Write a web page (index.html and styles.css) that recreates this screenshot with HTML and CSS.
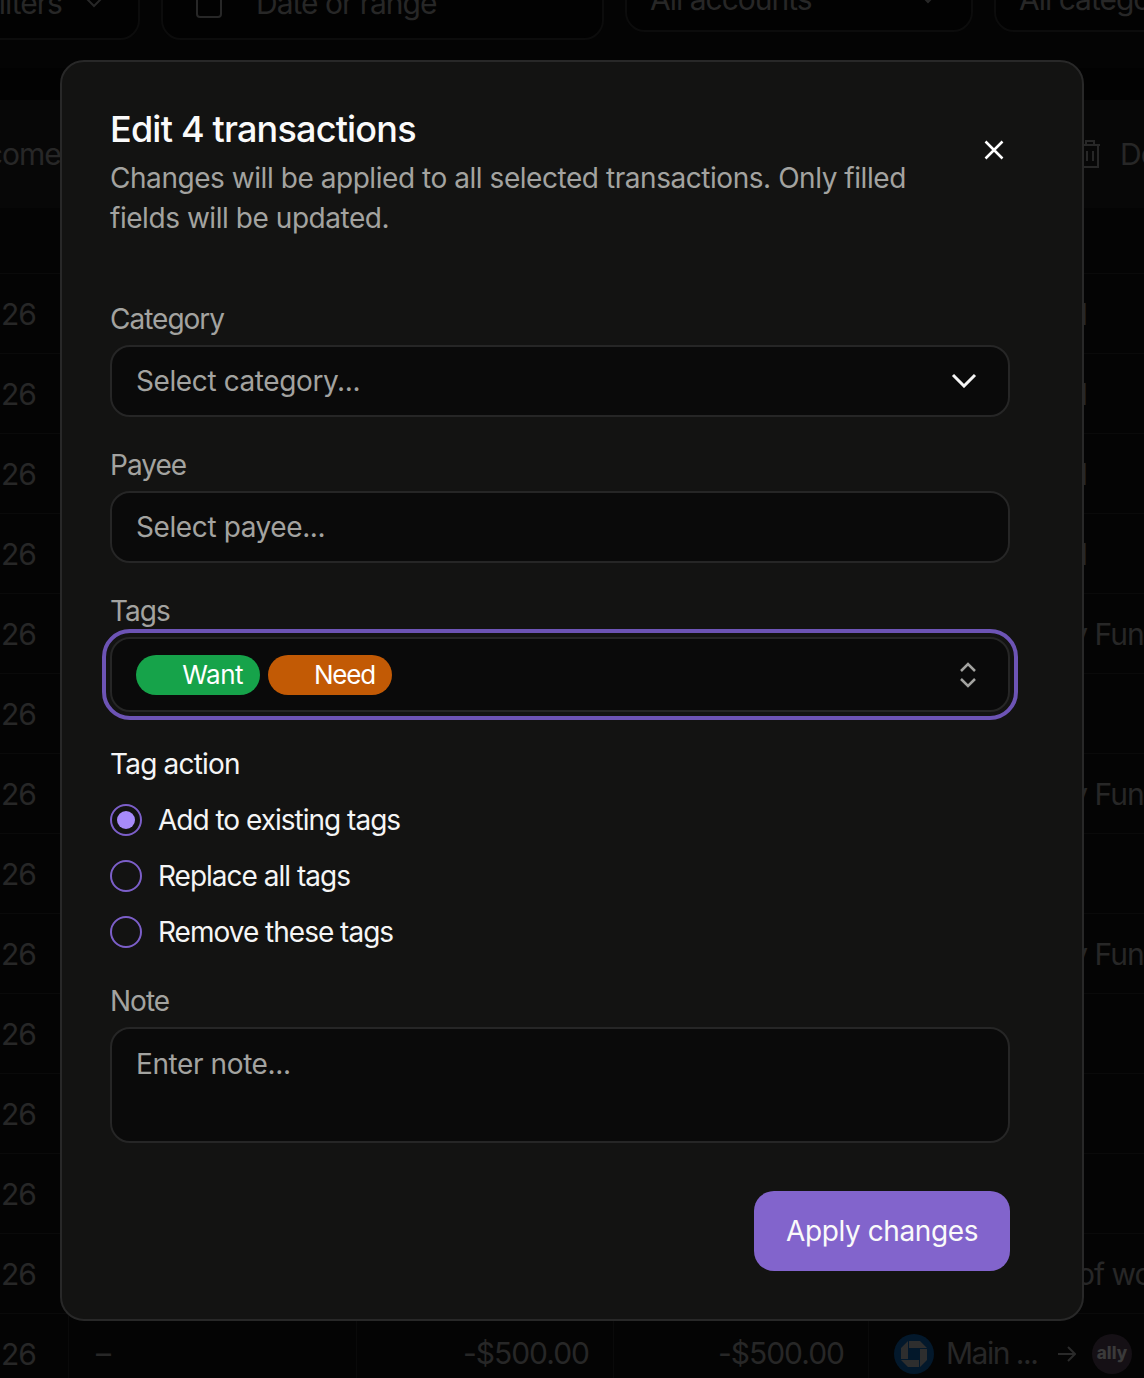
FILE: index.html
```html
<!DOCTYPE html>
<html lang="en">
<head>
    <meta charset="UTF-8">
    <meta name="viewport" content="width=device-width, initial-scale=1.0">
    <title>Edit 4 transactions</title>
    <link rel="stylesheet" href="styles.css">
</head>
<body>

<!-- Dimmed page behind the dialog -->
<div class="page">
    <div class="filters">
        <div class="filter filter-first">Filters <svg width="20" height="20" viewBox="0 0 20 20"><path d="M3 6l7 7 7-7" fill="none" stroke="currentColor" stroke-width="2"/></svg></div>
        <div class="filter filter-date">
            <svg width="28" height="32" viewBox="0 0 28 32"><rect x="2" y="4" width="24" height="26" rx="3" fill="none" stroke="currentColor" stroke-width="2"/></svg>
            Date or range
        </div>
        <div class="filter filter-short filter-accounts">All accounts <svg width="20" height="20" viewBox="0 0 20 20"><path d="M3 6l7 7 7-7" fill="none" stroke="currentColor" stroke-width="2"/></svg></div>
        <div class="filter filter-short filter-cats">All categories</div>
    </div>

    <div class="table-head">
        <span class="head-left">Income</span>
        <span class="head-right">
            <svg width="22" height="32" viewBox="0 0 22 32"><path d="M1 7h20M7 7V3h8v4M3 7v22h16V7M8 13v10M14 13v10" fill="none" stroke="currentColor" stroke-width="2"/></svg>
            Delete
        </span>
    </div>

    <div class="rows">
        <div class="row"><span class="year">26</span><span class="cat cat-food">Food</span></div>
        <div class="row"><span class="year">26</span><span class="cat cat-food">Food</span></div>
        <div class="row"><span class="year">26</span><span class="cat cat-food">Food</span></div>
        <div class="row"><span class="year">26</span><span class="cat cat-food">Food</span></div>
        <div class="row"><span class="year">26</span><span class="cat cat-fun">Party Fun</span></div>
        <div class="row"><span class="year">26</span></div>
        <div class="row"><span class="year">26</span><span class="cat cat-fun">Party Fun</span></div>
        <div class="row"><span class="year">26</span></div>
        <div class="row"><span class="year">26</span><span class="cat cat-fun">Party Fun</span></div>
        <div class="row"><span class="year">26</span></div>
        <div class="row"><span class="year">26</span></div>
        <div class="row"><span class="year">26</span></div>
        <div class="row"><span class="year">26</span><span class="cat cat-cost">Cost of work</span></div>
        <div class="row">
            <span class="year">26</span>
            <span class="dash">–</span>
            <span class="amount">-$500.00</span>
            <span class="amount">-$500.00</span>
            <span class="accounts">
                <svg class="logo" width="40" height="40" viewBox="0 0 40 40">
                    <circle cx="20" cy="20" r="20" fill="#03182b"/>
                    <path d="M15 7H26L33 14H15ZM33 15V26L26 33V15ZM25 33H14L7 26H25ZM7 25V14L14 7V25Z" fill="#2e2e2e"/>
                </svg>
                <span class="acct-name">Main ...</span>
                <svg class="arrow" width="18" height="18" viewBox="0 0 18 18"><path d="M0 9h17M10 2l7 7-7 7" fill="none" stroke="#2a2a2a" stroke-width="2"/></svg>
                <span class="ally">ally</span>
            </span>
        </div>
    </div>
</div>

<!-- Dialog -->
<div class="modal">
    <button class="close" aria-label="Close">
        <svg width="20" height="20" viewBox="0 0 20 20"><path d="M1.500 1.500l17 17M18.500 1.500l-17 17" fill="none" stroke="currentColor" stroke-width="2.500"/></svg>
    </button>

    <h1>Edit 4 transactions</h1>
    <p class="desc">Changes will be applied to all selected transactions. Only filled fields will be updated.</p>

    <div class="group group-first">
        <label class="label">Category</label>
        <div class="field">
            <span class="placeholder">Select category...</span>
            <svg class="chevron" width="26" height="16" viewBox="0 0 26 16"><path d="M2 3l11 11L24 3" fill="none" stroke="currentColor" stroke-width="3"/></svg>
        </div>
    </div>

    <div class="group">
        <label class="label">Payee</label>
        <div class="field"><span class="placeholder">Select payee...</span></div>
    </div>

    <div class="group">
        <label class="label">Tags</label>
        <div class="field field-tags">
            <span class="chip chip-want">Want</span>
            <span class="chip chip-need">Need</span>
            <svg class="updown" width="18" height="26" viewBox="0 0 18 26"><path d="M2 9l7-7 7 7M2 17l7 7 7-7" fill="none" stroke="currentColor" stroke-width="2.500"/></svg>
        </div>
    </div>

    <div class="tag-action">
        <div class="action-title">Tag action</div>
        <div class="radio-row"><span class="radio checked"></span>Add to existing tags</div>
        <div class="radio-row"><span class="radio"></span>Replace all tags</div>
        <div class="radio-row"><span class="radio"></span>Remove these tags</div>
    </div>

    <div class="group group-note">
        <label class="label">Note</label>
        <div class="field field-note"><span class="placeholder">Enter note...</span></div>
    </div>

    <div class="actions">
        <button class="apply">Apply changes</button>
    </div>
</div>

</body>
</html>
```

FILE: styles.css
```css
* {
    box-sizing: border-box;
}

html, body {
    margin: 0;
    height: 100%;
    overflow: hidden;
}

body {
    position: relative;
    font-family: Inter, "Noto Sans", sans-serif;
    background-color: #040404;
    color: #fff;
}

/* Background page */
.page {
    color: #272727;
    font-size: 30px;
    letter-spacing: -1px;
}

.filters {
    display: flex;
    align-items: flex-start;
    gap: 21px;
    height: 130px;
    margin-top: -30px;
    margin-left: -40px;
    border-bottom: 32px solid #020202;
    white-space: nowrap;
}

.filter {
    display: flex;
    flex: none;
    align-items: center;
    height: 70px;
    padding-bottom: 4px;
    background-color: #020202;
    border: 2px solid #0c0c0c;
    border-radius: 20px;
    overflow: hidden;
}

.filter-first {
    width: 180px;
    gap: 22px;
    padding-left: 20px;
}

.filter-date {
    width: 443px;
    gap: 33px;
    padding-left: 32px;
}

.filter-short {
    height: 62px;
    padding-left: 23px;
}

.filter-accounts {
    width: 348px;
    gap: 106px;
}

.filter-cats {
    width: 300px;
}

.table-head {
    display: flex;
    justify-content: space-between;
    align-items: center;
    height: 108px;
    background-color: #070707;
    white-space: nowrap;
}

.head-left {
    margin-left: -38px;
}

.head-right {
    display: flex;
    align-items: center;
    gap: 19px;
    margin-right: -61px;
}

.rows {
    margin-top: 65px;
}

.row {
    display: grid;
    grid-template-columns: 68px 288px 257px 255px 1fr;
    align-items: center;
    height: 80px;
    border-top: 1px solid #0a0a0a;
}

.year {
    padding-left: 1px;
}

.cat {
    grid-column: 5;
    white-space: nowrap;
}

.cat-food {
    padding-left: 152px;
}

.cat-fun {
    padding-left: 149px;
}

.cat-cost {
    padding-left: 140px;
}

.dash {
    padding-left: 27px;
    border-left: 1px solid #0a0a0a;
    line-height: 79px;
}

.amount {
    padding-right: 24px;
    border-left: 1px solid #0a0a0a;
    line-height: 79px;
    text-align: right;
}

.accounts {
    display: flex;
    align-items: center;
    padding-left: 25px;
    border-left: 1px solid #0a0a0a;
    line-height: 79px;
    white-space: nowrap;
}

.logo,
.arrow {
    flex: none;
}

.acct-name {
    flex: none;
    width: 124px;
    padding-left: 12px;
    letter-spacing: -1.5px;
}

.ally {
    display: flex;
    justify-content: center;
    align-items: center;
    flex: none;
    width: 40px;
    height: 40px;
    margin-left: 16px;
    border-radius: 50%;
    background-color: #151015;
    color: #3a3a3a;
    font-size: 17px;
    font-weight: 800;
    letter-spacing: 0;
}

/* Dialog */
.modal {
    position: absolute;
    top: 60px;
    left: 60px;
    width: 1024px;
    height: 1261px;
    padding: 48px 74px 48px 48px;
    background-color: #131312;
    border: 2px solid #282828;
    border-radius: 24px;
}

.close {
    position: absolute;
    top: 78px;
    right: 78px;
    display: flex;
    padding: 0;
    background: none;
    border: none;
    color: #fff;
}

h1 {
    margin: 0;
    font-size: 36px;
    font-weight: 500;
    line-height: 38px;
    letter-spacing: -0.8px;
    color: #fafafa;
}

.desc {
    width: 810px;
    margin: 10px 0 0;
    font-size: 28px;
    line-height: 40px;
    letter-spacing: -0.45px;
    color: #a3a3a0;
}

.group {
    margin-top: 32px;
}

.group-first {
    margin-top: 65px;
}

.group-note {
    margin-top: 37px;
}

.label {
    display: block;
    margin-bottom: 10px;
    font-size: 28px;
    line-height: 32px;
    letter-spacing: -1px;
    color: #a3a3a0;
}

.field {
    display: flex;
    align-items: center;
    position: relative;
    width: 900px;
    height: 72px;
    padding: 0 24px;
    background-color: #0a0a0a;
    border: 2px solid #262626;
    border-radius: 20px;
}

.placeholder {
    font-size: 28px;
    letter-spacing: -0.4px;
    color: #a3a3a0;
}

.chevron {
    position: absolute;
    right: 31px;
    margin-top: -2px;
    color: #f5f5f5;
}

.field-tags {
    gap: 8px;
    height: 75px;
    outline: 4px solid #6d54b5;
    outline-offset: 4px;
}

.chip {
    display: flex;
    align-items: center;
    justify-content: flex-end;
    width: 124px;
    height: 40px;
    padding-right: 17px;
    border-radius: 20px;
    font-size: 26px;
    letter-spacing: -0.5px;
    color: #fff;
}

.chip-want {
    background-color: #16a34a;
}

.chip-need {
    background-color: #c25a05;
    letter-spacing: -1.2px;
}

.updown {
    position: absolute;
    right: 31px;
    color: #a3a3a0;
}

.tag-action {
    display: flex;
    flex-direction: column;
    gap: 24px;
    margin-top: 36px;
}

.action-title {
    font-size: 28px;
    line-height: 32px;
    letter-spacing: -0.8px;
    color: #f5f5f5;
}

.radio-row {
    display: flex;
    align-items: center;
    gap: 16px;
    height: 32px;
    font-size: 28px;
    letter-spacing: -1px;
    color: #f5f5f5;
}

.radio {
    display: flex;
    justify-content: center;
    align-items: center;
    flex: none;
    width: 32px;
    height: 32px;
    border: 2px solid #7c5fc9;
    border-radius: 50%;
}

.radio.checked::after {
    content: "";
    width: 18px;
    height: 18px;
    border-radius: 50%;
    background-color: #a78bfa;
}

.field-note {
    align-items: flex-start;
    height: 116px;
    padding-top: 18px;
}

.actions {
    display: flex;
    justify-content: flex-end;
    width: 900px;
    margin-top: 48px;
}

.apply {
    width: 256px;
    height: 80px;
    background-color: #8264cc;
    border: none;
    border-radius: 20px;
    font-family: inherit;
    font-size: 28px;
    letter-spacing: -0.4px;
    color: #fafafa;
}
```
